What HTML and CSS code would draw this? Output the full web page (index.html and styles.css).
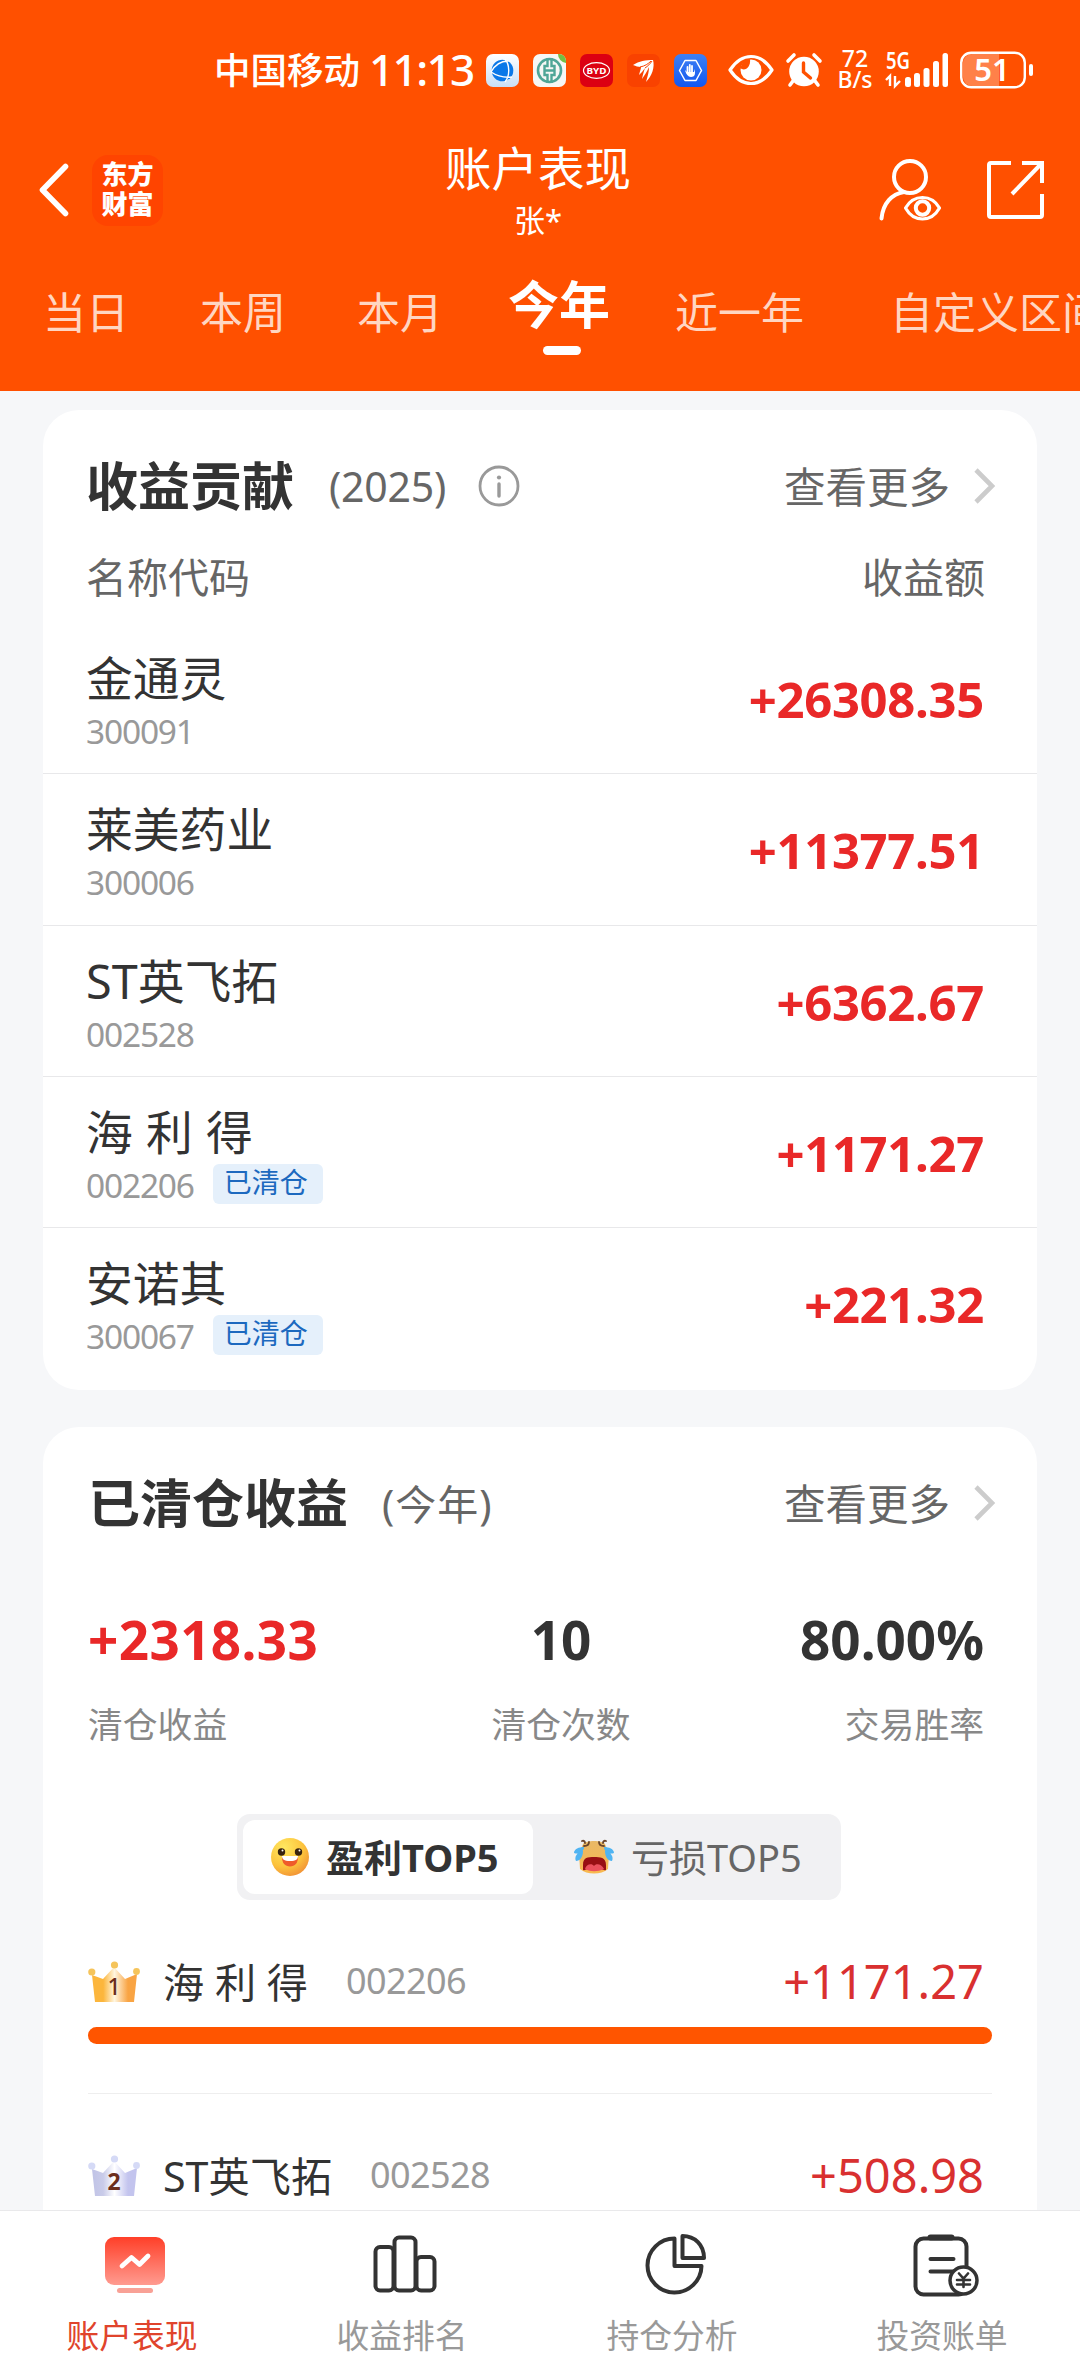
FILE: index.html
```html
<!DOCTYPE html>
<html lang="zh-CN">
<head>
    <meta charset="UTF-8">
    <meta name="viewport" content="width=device-width, initial-scale=1.0">
    <title>账户表现</title>
    <link rel="stylesheet" href="styles.css">
</head>
<body>
    <div class="app">
        <header class="header">
            <div class="status">
                <span class="carrier">中国移动</span>
                <span class="time">11:13</span>
                <div class="status-apps">
                    <svg width="33" height="33" viewBox="0 0 33 33">
                        <defs><linearGradient id="globeBg" x1="0" y1="0" x2="0" y2="1"><stop offset="0" stop-color="#fff"/><stop offset="1" stop-color="#c9dff5"/></linearGradient></defs>
                        <rect width="33" height="33" rx="7" fill="url(#globeBg)"/>
                        <circle cx="16.5" cy="16.5" r="10.8" fill="#0a78e8"/>
                        <path d="M5 18C10 9 16 7 22 7M5 18C11 22 18 24 26 23M19 5C24 11 24 22 19 28" fill="none" stroke="#fff" stroke-width="1.4"/>
                    </svg>
                    <svg width="33" height="33" viewBox="0 0 33 33">
                        <rect width="33" height="33" rx="7" fill="#f6f7f5"/>
                        <path d="M25 0h1a7 7 0 0 1 7 7v2a9 9 0 0 1-8-9z" fill="#72bf44"/>
                        <circle cx="16.500" cy="16.500" r="11.500" fill="none" stroke="#4fa697" stroke-width="2.600"/>
                        <path d="M14.500 4v8h-3v9h3v8M18.500 4v8h3v9h-3v8M11 16.500h11" fill="none" stroke="#4fa697" stroke-width="2.400"/>
                    </svg>
                    <svg width="33" height="33" viewBox="0 0 33 33">
                        <rect width="33" height="33" rx="7" fill="#dc0012"/>
                        <ellipse cx="16.500" cy="16.500" rx="13" ry="7.800" fill="none" stroke="#fff" stroke-width="1.200"/>
                        <text x="16.500" y="19.500" class="byd" textLength="20" lengthAdjust="spacingAndGlyphs">BYD</text>
                    </svg>
                    <svg width="33" height="33" viewBox="0 0 33 33">
                        <rect width="33" height="33" rx="7" fill="#f94200"/>
                        <path d="M6 11C12 7 19 6 26 6c2 7-1 16-7 22 2-7 3-11 3-15-2 5-5 9-7 12 1-5 2-8 3-11-2 3-4 5-6 7 1-4 2-6 2-8-3 0-5-1-8-2z" fill="#fff"/>
                        <path d="M13 13c5-1 8-3 11-6M18 14c3-2 5-4 7-7" fill="none" stroke="#f94200" stroke-width="1"/>
                    </svg>
                    <svg width="33" height="33" viewBox="0 0 33 33">
                        <defs><linearGradient id="handBg" x1="0" y1="0" x2="0" y2="1"><stop offset="0" stop-color="#3e80f4"/><stop offset="1" stop-color="#1257f0"/></linearGradient></defs>
                        <rect width="33" height="33" rx="7" fill="url(#handBg)"/>
                        <path d="M11 6.500h11l5.500 10-5.500 10H11l-5.500-10z" fill="none" stroke="#fff" stroke-width="1.500" stroke-linejoin="round"/>
                        <path d="M13.500 19v-6M15.800 18v-7M18 18v-6" stroke="#fff" stroke-width="1.800" stroke-linecap="round"/>
                        <path d="M11 16l2 2h7l1-3v4c0 3-2 4-4 4-3 0-5-3-6-7z" fill="#fff"/>
                    </svg>
                </div>
                <svg class="status-eye" width="46" height="32" viewBox="0 0 46 32">
                    <path d="M2 16C8 7 15 2.500 23 2.500S38 7 44 16C38 25 31 29.500 23 29.500S8 25 2 16z" fill="none" stroke="#fff" stroke-width="3.200" stroke-linejoin="round"/>
                    <circle cx="23" cy="16" r="10.500" fill="#fff"/>
                    <path d="M12 14c5 4 11-1 10-9l-6 1z" fill="#ff5000"/>
                </svg>
                <svg class="status-alarm" width="36" height="34" viewBox="0 0 36 34">
                    <circle cx="18" cy="18.500" r="14.800" fill="#fff"/>
                    <path d="M2 8l6-6M34 8l-6-6M7 28l-3 4M29 28l3 4" stroke="#fff" stroke-width="3.600" stroke-linecap="round"/>
                    <path d="M17.500 10v9l7 6" fill="none" stroke="#ff5000" stroke-width="3.400" stroke-linecap="round"/>
                </svg>
                <div class="speed"><span>72</span><span>B/s</span></div>
                <svg class="signal" width="64" height="38" viewBox="0 0 64 38">
                    <text x="0" y="18" class="signal-text" textLength="24" lengthAdjust="spacingAndGlyphs">5G</text>
                    <path d="M0 29l4-4v10M9 25v10l5-5" fill="none" stroke="#fff" stroke-width="2.400"/>
                    <g fill="#fff">
                        <rect x="19" y="26" width="6" height="10" rx="2.500"/>
                        <rect x="28" y="22" width="6" height="14" rx="2.500"/>
                        <rect x="37.500" y="17" width="6" height="19" rx="2.500"/>
                        <rect x="47" y="10" width="6" height="26" rx="2.500"/>
                        <rect x="56.500" y="2" width="5.500" height="34" rx="2.500"/>
                    </g>
                </svg>
                <svg class="battery" width="74" height="38" viewBox="0 0 74 38">
                    <path d="M12 3h27v32H12a9 9 0 0 1-9-9V12a9 9 0 0 1 9-9z" fill="#ff8149"/>
                    <rect x="1.200" y="1.700" width="63.600" height="34.600" rx="10" fill="none" stroke="#fff" stroke-width="2.400"/>
                    <rect x="69" y="13" width="4" height="12" rx="2" fill="#fff"/>
                    <text x="32" y="30" class="battery-text">51</text>
                </svg>
            </div>

            <div class="navbar">
                <svg class="back" width="32" height="56" viewBox="0 0 32 56"><path d="M27.500 4.500L4.500 28l23 23.500" fill="none" stroke="#fff" stroke-width="5.600" stroke-linecap="round" stroke-linejoin="round"/></svg>
                <div class="logo"><span>东方</span><span>财富</span></div>
                <div class="heading">
                    <h1>账户表现</h1>
                    <p>张*</p>
                </div>
                <svg class="user-icon" width="62" height="62" viewBox="0 0 62 62" fill="none" stroke="#fff" stroke-width="4" stroke-linecap="round">
                    <circle cx="31" cy="18" r="16"/>
                    <path d="M2.500 59.500C4 44 13 35 25 33"/>
                    <path d="M26.500 49C31 41 37 38.500 43.500 38.500S56 41 60.500 49C56 57 50 60 43.500 60S31 57 26.500 49z" stroke-width="3.200" stroke-linejoin="round"/>
                    <circle cx="43.500" cy="49" r="6.700"/>
                </svg>
                <svg class="share-icon" width="57" height="58" viewBox="0 0 57 58" fill="none" stroke="#fff" stroke-width="4">
                    <path d="M24 2H4Q2 2 2 4V54Q2 56 4 56H53Q55 56 55 54V33"/>
                    <path d="M35 2H55V22M54 3L25 33"/>
                </svg>
            </div>

            <nav class="tabs">
                <span>当日</span>
                <span>本周</span>
                <span>本月</span>
                <span class="active">今年</span>
                <span>近一年</span>
                <span>自定义区间</span>
            </nav>
        </header>

        <main class="content">
            <section class="card">
                <div class="card-head">
                    <h2>收益贡献</h2>
                    <span class="period">(2025)</span>
                    <svg class="info" width="42" height="42" viewBox="0 0 42 42"><circle cx="21" cy="21" r="19" fill="none" stroke="#999" stroke-width="2.800"/><circle cx="21" cy="12.500" r="2.100" fill="#999"/><path d="M21 19v12" stroke="#999" stroke-width="3.400" stroke-linecap="round"/></svg>
                    <a class="more"><span>查看更多</span><svg width="21" height="36" viewBox="0 0 21 36"><path d="M2 2l16 16L2 34" fill="none" stroke="#ccc" stroke-width="4.600"/></svg></a>
                </div>
                <div class="list-head"><span>名称代码</span><span>收益额</span></div>
                <ul class="list">
                    <li>
                        <div><div class="name">金通灵</div><div class="code">300091</div></div>
                        <b>+26308.35</b>
                    </li>
                    <li>
                        <div><div class="name">莱美药业</div><div class="code">300006</div></div>
                        <b>+11377.51</b>
                    </li>
                    <li>
                        <div><div class="name">ST英飞拓</div><div class="code">002528</div></div>
                        <b>+6362.67</b>
                    </li>
                    <li>
                        <div><div class="name">海 利 得</div><div class="code">002206<span class="tag">已清仓</span></div></div>
                        <b>+1171.27</b>
                    </li>
                    <li>
                        <div><div class="name">安诺其</div><div class="code">300067<span class="tag">已清仓</span></div></div>
                        <b>+221.32</b>
                    </li>
                </ul>
            </section>

            <section class="card closed">
                <div class="card-head">
                    <h2>已清仓收益</h2>
                    <span class="period">(今年)</span>
                    <a class="more"><span>查看更多</span><svg width="21" height="36" viewBox="0 0 21 36"><path d="M2 2l16 16L2 34" fill="none" stroke="#ccc" stroke-width="4.600"/></svg></a>
                </div>
                <div class="stats">
                    <div><b class="up">+2318.33</b><span>清仓收益</span></div>
                    <div><b>10</b><span>清仓次数</span></div>
                    <div><b>80.00%</b><span>交易胜率</span></div>
                </div>
                <div class="segment">
                    <div class="segment-item selected">
                        <svg width="40" height="40" viewBox="0 0 40 40">
                            <defs><radialGradient id="smile" cx=".35" cy=".25" r=".85"><stop offset="0" stop-color="#ffe860"/><stop offset=".6" stop-color="#fcc23c"/><stop offset="1" stop-color="#f08a35"/></radialGradient></defs>
                            <circle cx="20" cy="20" r="19" fill="url(#smile)"/>
                            <circle cx="11.500" cy="15" r="3.700" fill="#38230f"/><circle cx="28.500" cy="15" r="3.700" fill="#38230f"/>
                            <circle cx="12.500" cy="13.500" r="1" fill="#fff"/><circle cx="29.500" cy="13.500" r="1" fill="#fff"/>
                            <path d="M12 20h16c0 6-3 9.500-8 9.500S12 26 12 20z" fill="#ef5b2a"/>
                            <path d="M12 19h16c0 3-2 5-8 5s-8-2-8-5z" fill="#fff"/>
                        </svg>
                        <span>盈利TOP5</span>
                    </div>
                    <div class="segment-item">
                        <svg width="44" height="36" viewBox="0 0 44 36">
                            <defs><linearGradient id="cry" x1="0" y1="0" x2="0" y2="1"><stop offset="0" stop-color="#e9b866"/><stop offset="1" stop-color="#f9b94e"/></linearGradient></defs>
                            <path d="M11 5C14 1 30 1 33 5l4 10-1 15c-7 6-21 6-28 0L7 15z" fill="url(#cry)"/>
                            <path d="M10 2c2-1 3 1 3 2M12 7c3 0 5-1 5-4M34 2c-2-1-3 1-3 2M32 7c-3 0-5-1-5-4" fill="none" stroke="#69452b" stroke-width="1.800" stroke-linecap="round"/>
                            <path d="M11 26c0-8 5-8 11-8s12 0 12 8v5c-3 1-4-2-12-2s-8 3-11 2z" fill="#980f13"/>
                            <path d="M13 30c1-5 7-6 9-3 2-3 8-2 10 3-7 3-13 3-19 0z" fill="#ea505c"/>
                            <g fill="#50b4f2"><path d="M12 8c0 4-4 8-10 6 0-4 5-6 10-6zM11 12c0 6-3 10-7 10-2-4 1-9 7-10zM32 8c0 4 4 8 10 6 0-4-5-6-10-6zM33 12c0 6 3 10 7 10 2-4-1-9-7-10z"/></g>
                        </svg>
                        <span>亏损TOP5</span>
                    </div>
                </div>
                <div class="rank">
                    <div class="rank-row">
                        <svg class="crown" width="52" height="42" viewBox="0 0 52 42">
                            <defs><linearGradient id="gold"><stop offset="0" stop-color="#fcb63c"/><stop offset=".25" stop-color="#fcb63c"/><stop offset=".5" stop-color="#fff6e0"/><stop offset=".8" stop-color="#f9a443"/><stop offset="1" stop-color="#f9a443"/></linearGradient></defs>
                            <path d="M4 14l11 4L26 6l11 12 12-5-3 28H7z" fill="url(#gold)"/>
                            <g fill="#f5c45b"><circle cx="3.800" cy="11" r="3.600"/><circle cx="26.500" cy="4" r="3.600"/><circle cx="48.500" cy="10.500" r="3.400"/></g>
                            <text x="26" y="34" class="crown-text">1</text>
                        </svg>
                        <span class="rank-name">海 利 得</span>
                        <span class="rank-code">002206</span>
                        <span class="rank-value">+1171.27</span>
                    </div>
                    <div class="bar"></div>
                </div>
                <div class="rank">
                    <div class="rank-row">
                        <svg class="crown" width="52" height="42" viewBox="0 0 52 42">
                            <defs><linearGradient id="silver"><stop offset="0" stop-color="#c0c3e6"/><stop offset=".25" stop-color="#c9cbe9"/><stop offset=".5" stop-color="#fff"/><stop offset=".8" stop-color="#c3c4ee"/><stop offset="1" stop-color="#c3c4ee"/></linearGradient></defs>
                            <path d="M4 14l11 4L26 6l11 12 12-5-3 28H7z" fill="url(#silver)"/>
                            <g fill="#d5daf6"><circle cx="3.800" cy="11" r="3.600"/><circle cx="26.500" cy="4" r="3.600"/><circle cx="48.500" cy="10.500" r="3.400"/></g>
                            <text x="26" y="35" class="crown-text bold">2</text>
                        </svg>
                        <span class="rank-name">ST英飞拓</span>
                        <span class="rank-code">002528</span>
                        <span class="rank-value">+508.98</span>
                    </div>
                </div>
            </section>
        </main>

        <footer class="tabbar">
            <div class="tab on">
                <svg width="66" height="66" viewBox="0 0 66 66">
                    <defs><linearGradient id="screen" x1="0" y1="0" x2="0" y2="1"><stop offset="0" stop-color="#ff3f28"/><stop offset="1" stop-color="#ff9b90"/></linearGradient></defs>
                    <rect x="3" y="5" width="60" height="48" rx="9" fill="url(#screen)"/>
                    <path d="M20 34l9.500-8.500 8 7L46 24" fill="none" stroke="#fff" stroke-width="4.800" stroke-linecap="round" stroke-linejoin="round"/>
                    <rect x="15" y="56" width="36" height="5" rx="2.500" fill="#f8a196"/>
                </svg>
                <span>账户表现</span>
            </div>
            <div class="tab">
                <svg width="66" height="66" viewBox="0 0 66 66" fill="none" stroke="#333" stroke-width="4">
                    <rect x="3.500" y="15" width="18" height="43.500" rx="4.500"/>
                    <rect x="22.500" y="5.500" width="21" height="53" rx="4.500"/>
                    <rect x="44.500" y="25" width="18" height="33.500" rx="4.500"/>
                </svg>
                <span>收益排名</span>
            </div>
            <div class="tab">
                <svg width="66" height="66" viewBox="0 0 66 66" fill="none" stroke="#333" stroke-width="4" stroke-linejoin="round">
                    <path d="M32.500 6.500A27 27 0 1 0 59.500 34H32.500z"/>
                    <path d="M40.500 4C53 4 62 13 62 26H40.500z"/>
                </svg>
                <span>持仓分析</span>
            </div>
            <div class="tab">
                <svg width="68" height="66" viewBox="0 0 68 66" fill="none" stroke="#333" stroke-width="4" stroke-linecap="round">
                    <rect x="4.500" y="6.500" width="51" height="56" rx="8"/>
                    <path d="M19.500 5.500H40.500" stroke-width="6"/>
                    <path d="M19.500 27H42.500M19.500 39.500H43"/>
                    <circle cx="52.500" cy="48.500" r="13.500" fill="#fff" stroke-width="3.500"/>
                    <path d="M48 41.500l4.500 5 4.500-5M52.500 47v8M46 48h13M46 52.500h13" stroke-width="2.600"/>
                </svg>
                <span>投资账单</span>
            </div>
        </footer>
    </div>
</body>
</html>
```
FILE: styles.css
```css
body {
    margin: 0;
    font-family: "Noto Sans", "Noto Sans CJK SC", sans-serif;
    color: #333;
    background-color: #f6f7f9;
}

h1, h2, p, ul {
    margin: 0;
    padding: 0;
}

svg {
    display: block;
    flex-shrink: 0;
    overflow: visible;
}

.app {
    display: flex;
    flex-direction: column;
    width: 1080px;
    height: 2376px;
    overflow: hidden;
}

/* Header */
.header {
    height: 391px;
    flex-shrink: 0;
    background-color: #ff5000;
    color: #fff;
    overflow: hidden;
}

.status {
    display: flex;
    align-items: center;
    height: 140px;
    padding-left: 214px;
}

.carrier {
    width: 155px;
    padding-bottom: 3px;
    font-size: 36.5px;
    font-weight: 500;
}

.time {
    width: 117px;
    padding-bottom: 2px;
    font-family: "Noto Sans";
    font-size: 44px;
    font-weight: 500;
    letter-spacing: -1.6px;
}

.status-apps {
    display: flex;
    gap: 14px;
}

.byd {
    fill: #fff;
    font: 700 8px "Noto Sans";
    text-anchor: middle;
}

.status-eye {
    margin-left: 21px;
}

.status-alarm {
    margin-left: 12px;
}

.speed {
    display: flex;
    flex-direction: column;
    align-items: center;
    width: 40px;
    margin-left: 13px;
    padding-bottom: 3px;
    font: 500 23px/21px "Noto Sans";
}

.signal {
    margin-left: 11px;
}

.signal-text {
    fill: #fff;
    font: 600 23px "Noto Sans";
}

.battery {
    margin-left: 10px;
}

.battery-text {
    fill: #fff;
    font: 600 31px "Noto Sans";
    text-anchor: middle;
}

.navbar {
    display: flex;
    align-items: center;
    height: 100px;
    padding: 0 36px 0 38px;
}

.logo {
    display: flex;
    flex-direction: column;
    justify-content: center;
    align-items: center;
    box-sizing: border-box;
    width: 71px;
    height: 71px;
    margin-left: 22px;
    padding-bottom: 3px;
    border-radius: 16px;
    background-color: #ff4400;
    font-size: 26px;
    font-weight: 900;
    line-height: 30px;
}

.heading {
    width: 200px;
    margin-left: 275px;
    padding-top: 5px;
    text-align: center;
}

.heading h1 {
    font-size: 46.5px;
    font-weight: 400;
    line-height: 56px;
}

.heading p {
    font-size: 31px;
    line-height: 49px;
}

.user-icon {
    margin-left: 241px;
}

.share-icon {
    margin-left: auto;
}

.tabs {
    display: flex;
    align-items: flex-start;
    padding: 43px 0 0 43px;
    font-size: 43px;
    line-height: 60px;
    color: #ffd6c2;
    white-space: nowrap;
}

.tabs span {
    flex-shrink: 0;
    margin-right: 71px;
}

.tabs .active {
    display: flex;
    flex-direction: column;
    align-items: center;
    margin: -9px 65px 0 -8px;
    padding-left: 2px;
    font-size: 51px;
    font-weight: 700;
    color: #fff;
}

.tabs .active::after {
    content: "";
    width: 38px;
    height: 9px;
    margin: 12px 0 0 6px;
    border-radius: 5px;
    background-color: #fff;
}

.tabs .active + span {
    margin-right: 86px;
}

/* Cards */
.content {
    flex: 1;
    min-height: 0;
    overflow: hidden;
    padding: 19px 43px 0;
}

.card {
    box-sizing: border-box;
    height: 980px;
    margin-bottom: 37px;
    padding-top: 46px;
    border-radius: 36px;
    background-color: #fff;
    overflow: hidden;
}

.card-head {
    display: flex;
    align-items: center;
    height: 60px;
    padding: 0 42px 0 43px;
}

.card-head h2 {
    font-size: 52px;
    line-height: 60px;
}

.period {
    margin-left: 35px;
    font-size: 41px;
    letter-spacing: -0.2px;
    color: #666;
}

.closed .card-head h2 {
    margin-left: 2px;
}

.closed .period {
    margin-left: 34px;
    padding-bottom: 3px;
    letter-spacing: 1px;
}

.info {
    margin-left: 32px;
}

.more {
    display: flex;
    align-items: center;
    gap: 24px;
    margin-left: auto;
    font-size: 41.5px;
    color: #666;
}

.more span {
    padding-bottom: 3px;
}

.list-head {
    display: flex;
    justify-content: space-between;
    margin-top: 31px;
    padding: 0 52px 0 43px;
    font-size: 41px;
    line-height: 60px;
    color: #666;
}

.list {
    margin-top: 16px;
    list-style: none;
}

.list li {
    display: flex;
    justify-content: space-between;
    box-sizing: border-box;
    height: 151.3px;
    padding: 32px 53px 0 43px;
    border-bottom: 1.5px solid #e8e8ea;
}

.list li:last-child {
    border-bottom: none;
}

.list b {
    margin-top: 14px;
    font-size: 49px;
    line-height: 60px;
    letter-spacing: -0.3px;
    color: #e92828;
}

.name {
    font-size: 46.8px;
    line-height: 46px;
    word-spacing: 1px;
}

.code {
    display: flex;
    margin-top: 10px;
    font-size: 33.5px;
    line-height: 40px;
    letter-spacing: -1.2px;
    color: #999;
}

.tag {
    height: 40px;
    margin: -1px 0 0 19px;
    padding: 0 15px 0 11px;
    border-radius: 6px;
    background-color: #e5f0fb;
    font-size: 28px;
    line-height: 36px;
    letter-spacing: 0;
    color: #1c69bf;
}

/* Closed positions */
.stats {
    display: grid;
    grid-template-columns: 1fr 1fr 1fr;
    margin-top: 77px;
    padding: 0 53px 0 45px;
}

.stats div {
    display: flex;
    flex-direction: column;
    align-items: flex-start;
}

.stats div:nth-child(2) {
    align-items: center;
    padding-left: 50px;
}

.stats div:nth-child(3) {
    align-items: flex-end;
}

.stats b {
    font-size: 53px;
    line-height: 60px;
}

.stats .up {
    letter-spacing: 0.4px;
    color: #e92828;
}

.stats span {
    margin-top: 35px;
    font-size: 34.8px;
    line-height: 40px;
    color: #888;
}

.segment {
    display: flex;
    box-sizing: border-box;
    width: 604px;
    height: 86px;
    margin: 69px 0 0 194px;
    padding: 6px;
    border-radius: 13px;
    background-color: #f1f1f3;
}

.segment-item {
    display: flex;
    align-items: center;
    gap: 15px;
    padding-left: 39px;
    font-size: 38px;
    color: #666;
}

.segment-item span {
    padding-bottom: 3px;
}

.segment-item.selected {
    box-sizing: border-box;
    width: 290px;
    padding-left: 27px;
    gap: 16px;
    border-radius: 12px;
    background-color: #fff;
    font-weight: 700;
    color: #333;
}

.rank {
    margin: 0 45px;
    padding: 52px 0 49px;
    border-bottom: 1px solid #eee;
}

.rank-row {
    display: flex;
    align-items: center;
    height: 60px;
    padding-right: 8px;
}

.rank-name {
    margin-left: 23px;
    padding-bottom: 5px;
    font-size: 41.2px;
}

.rank-code {
    margin-left: 38px;
    padding-bottom: 3px;
    font-size: 36px;
    letter-spacing: -0.6px;
    color: #999;
}

.rank-value {
    margin-left: auto;
    padding-bottom: 2px;
    font-size: 47px;
    color: #d93030;
}

.crown-text {
    fill: #6b2d1c;
    font: 500 23px "Noto Sans";
    text-anchor: middle;
}

.crown-text.bold {
    font-weight: 700;
}

.bar {
    height: 17px;
    margin-top: 15px;
    border-radius: 9px;
    background-color: #ff5500;
}

/* Bottom tab bar */
.tabbar {
    display: flex;
    flex-shrink: 0;
    box-sizing: border-box;
    height: 166px;
    border-top: 1px solid #e9e9eb;
    background-color: #fff;
}

.tab {
    display: flex;
    flex-direction: column;
    align-items: center;
    width: 270px;
    padding-top: 21px;
    font-size: 32.8px;
    line-height: 40px;
    color: #999;
}

.tab span {
    margin: 18px 6px 0 0;
}

.tab.on {
    color: #e0442c;
}
```
